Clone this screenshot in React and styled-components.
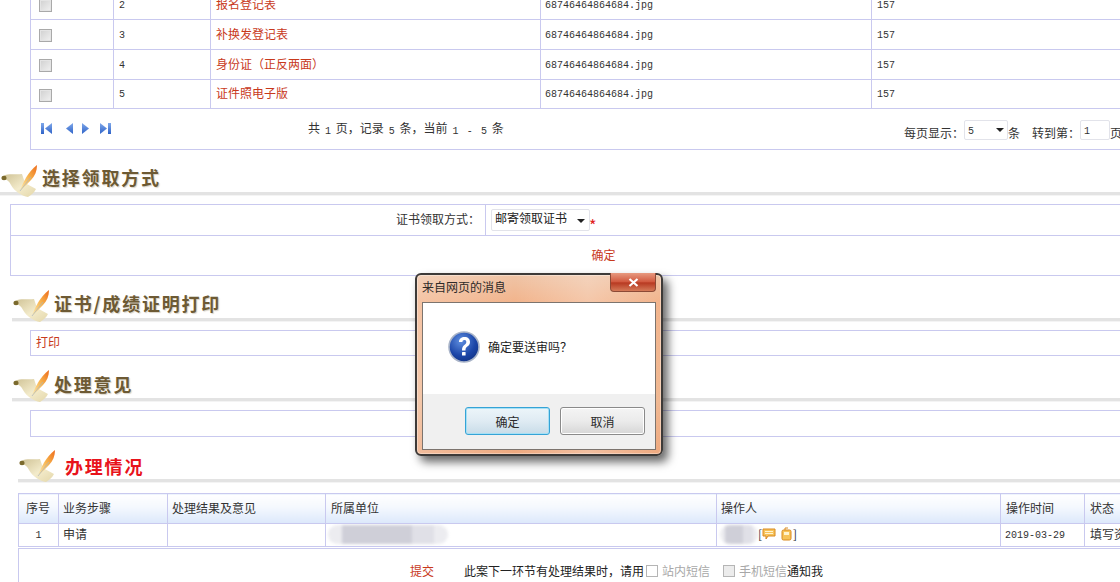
import React from 'react';
import styled, { createGlobalStyle } from 'styled-components';

const line = '#c9c9ef';
const linkRed = '#c8391c';

const GlobalStyle = createGlobalStyle`
  html, body {
    margin: 0;
    padding: 0;
    background: #fff;
    overflow: hidden;
  }
  body {
    font-family: "Noto Sans CJK SC", "Liberation Sans", sans-serif;
    font-size: 12px;
    color: #333;
  }
`;

const Viewport = styled.div`
  position: relative;
  width: 1120px;
  height: 582px;
  overflow: hidden;
`;

const Page = styled.div`
  margin-top: -11px;
  width: 1120px;
`;

const Table = styled.table`
  border-collapse: collapse;
  table-layout: fixed;
  width: ${p => p.$width}px;
  margin-left: ${p => p.$left}px;
  margin-top: ${p => p.$top || 0}px;
  background: #fff;
`;

const Col = styled.col`
  width: ${p => p.$w}px;
`;

const Row = styled.tr`
  height: ${p => p.$h}px;
`;

const Cell = styled.td`
  border: 1px solid ${line};
  padding: 0 ${p => p.$padRight || 0}px 2px ${p => p.$pad ?? 5}px;
  text-align: ${p => p.$align || 'left'};
  vertical-align: middle;
  line-height: 14px;
  white-space: nowrap;
  overflow: hidden;
`;

const HeadCell = styled.th`
  border: 1px solid ${line};
  padding: 0 0 2px ${p => p.$pad ?? 5}px;
  font-weight: normal;
  text-align: left;
  white-space: nowrap;
  background: linear-gradient(#ffffff, #f4f8fe 45%, #dce8fb);
`;

const LinkText = styled.span`
  color: ${linkRed};
`;

const Mono = styled.span`
  font-family: "Liberation Mono", monospace;
  font-size: 10px;
  color: #333;
  vertical-align: -1px;
`;

const Check = styled.input.attrs({ type: 'checkbox' })`
  appearance: none;
  display: block;
  width: 13px;
  height: 13px;
  margin: 4px 0 0;
  border: 1px solid #a9a9a9;
  background: linear-gradient(135deg, #d0d0d0, #f1f1f1);
  box-shadow: inset 0 0 0 1px #e4e4e4;
`;

const Pager = styled.div`
  display: flex;
  align-items: center;
  height: 38px;
  padding-left: 10px;
`;

const NavIcons = styled.div`
  display: flex;
  align-items: center;
  width: 267px;
`;

const NavSvg = styled.svg`
  flex: none;
  margin-left: ${p => p.$gap}px;
`;

const PageInfo = styled.div`
  width: 596px;
  margin-top: 3px;
  word-spacing: 2.2px;
`;

const PageTools = styled.div`
  display: flex;
  align-items: center;
  margin-top: 4px;
`;

const ToolText = styled.span`
  margin: 6px ${p => p.$mr || 0}px 0 0;
  line-height: 14px;
`;

const MiniSelect = styled.div`
  position: relative;
  box-sizing: border-box;
  width: ${p => p.$w}px;
  height: ${p => p.$h}px;
  padding-left: 3px;
  border: 1px solid #e2e3ea;
  border-radius: 2px;
  background: #fff;
  color: #222;
  line-height: ${p => p.$h - 6}px;
`;

const Arrow = styled.i`
  position: absolute;
  right: ${p => p.$right}px;
  top: ${p => p.$top}px;
  border-left: 4px solid transparent;
  border-right: 4px solid transparent;
  border-top: 4px solid #222;
`;

const Heading = styled.div`
  display: flex;
  align-items: flex-start;
  box-sizing: border-box;
  height: ${p => p.$h}px;
  margin: ${p => p.$top}px 0 0 ${p => p.$left}px;
  border-bottom: 3px solid #e3e3e3;
  box-shadow: 0 1px 0 #f4f4f4;
`;

const HeadingText = styled.h2`
  margin: ${p => p.$nudge}px 0 0 ${p => (p.$red ? 7 : 2)}px;
  font-size: 18px;
  line-height: 22px;
  font-weight: 700;
  letter-spacing: 1.8px;
  color: ${p => (p.$red ? '#e8131b' : '#6d5a34')};
  text-shadow: 1px 1px 1px rgba(130, 110, 70, ${p => (p.$red ? 0 : 0.3)});
`;

const Box = styled.div`
  box-sizing: border-box;
  height: ${p => p.$h}px;
  margin: 9px -10px 0 30px;
  padding: 4px 5px;
  border: 1px solid ${line};
  line-height: 14px;
`;

const Star = styled.span`
  color: #e02020;
  font-size: 16px;
  position: relative;
  top: 5px;
  left: -1px;
`;

const FormLine = styled.div`
  display: flex;
  align-items: center;
  margin-top: 2px;
`;

const Blur = styled.div`
  width: ${p => p.$w}px;
  height: 19px;
  border-radius: 10px;
  background:
    linear-gradient(90deg, transparent 12%, #cfcfd8 12%, #cfcfd8 ${p => p.$dark}%, #e0e0e7 ${p => p.$dark}%, #e0e0e7 88%, transparent 88%),
    #ececf0;
  filter: blur(1.5px);
  flex: none;
`;

const OperatorLine = styled.div`
  display: flex;
  align-items: center;
`;

const Bracket = styled.span`
  color: #333;
  line-height: 14px;
`;

const Submit = styled.div`
  box-sizing: border-box;
  display: flex;
  align-items: center;
  height: 60px;
  margin: 1px -10px 0 18px;
  padding: 0 0 16px 391px;
  border: 1px solid ${line};
  border-bottom: none;
  color: #222;
`;

const SubmitNote = styled.span`
  margin-left: 30px;
`;

const Muted = styled.span`
  color: #a8a8a8;
  margin-left: ${p => p.$ml}px;
`;

const SubmitCheck = styled(Check)`
  margin: 0 0 0 ${p => p.$ml}px;
  width: 12px;
  height: 12px;
  border-color: #b5b5b5;
  background: ${p => (p.$grey ? '#ececec' : '#fff')};
  box-shadow: none;
`;

const Dialog = styled.div`
  position: absolute;
  left: 415px;
  top: 273px;
  box-sizing: border-box;
  width: 248px;
  height: 183px;
  padding: 27px 5px 5px;
  border: 2px solid #3d3a38;
  border-radius: 6px;
  background:
    linear-gradient(90deg, rgba(255,255,255,.22), rgba(255,255,255,0) 40%, rgba(255,255,255,.25) 70%, rgba(255,255,255,0)),
    linear-gradient(#efc4a6, #f2b48c 15%, #f0b892 70%, #eea97f);
  box-shadow: 5px 6px 10px rgba(0, 0, 0, 0.6), inset 0 0 0 1px rgba(255, 255, 255, 0.35);
`;

const DialogTitle = styled.div`
  position: absolute;
  left: 5px;
  top: 4px;
  color: #2e2a28;
  line-height: 16px;
`;

const CloseButton = styled.div`
  position: absolute;
  right: 5px;
  top: -2px;
  box-sizing: border-box;
  width: 46px;
  height: 19px;
  border: 1px solid #8c4a36;
  border-top: none;
  border-radius: 0 0 4px 4px;
  background: linear-gradient(#e79a80, #d25a40 48%, #b83a22 55%, #d47a58);
  display: flex;
  align-items: center;
  justify-content: center;
`;

const DialogInner = styled.div`
  box-sizing: border-box;
  height: 148px;
  display: flex;
  flex-direction: column;
  border: 1px solid #7c746e;
  background: #fff;
`;

const DialogBody = styled.div`
  flex: 1;
  display: flex;
  align-items: flex-start;
  gap: 8px;
  padding: 28px 0 0 25px;
  color: #222;
`;

const DialogMessage = styled.div`
  margin-top: 8px;
  line-height: 16px;
`;

const DialogFoot = styled.div`
  display: flex;
  justify-content: flex-end;
  gap: 10px;
  height: 55px;
  box-sizing: border-box;
  padding: 13px 10px 0 0;
  background: #f0f0f0;
`;

const DialogButton = styled.div`
  box-sizing: border-box;
  width: 85px;
  height: 28px;
  display: flex;
  align-items: center;
  justify-content: center;
  color: #2a2a2a;
  border-radius: 3px;
  border: 1px solid ${p => (p.$primary ? '#35a3d6' : '#8a8a8a')};
  background: ${p => p.$primary
    ? 'linear-gradient(#ecf5fa, #dfebf3 50%, #c8dce8)'
    : 'linear-gradient(#f4f4f4, #ebebeb 50%, #d6d6d6)'};
  box-shadow: inset 0 0 0 1px ${p => (p.$primary ? '#a6e0f5' : '#fff')};
`;

const IconSvg = styled.svg`
  flex: none;
  margin: ${p => p.$margin || 0};
`;

const QuillIcon = () => (
  <IconSvg width="40" height="33" viewBox="0 0 40 33">
    <defs>
      <linearGradient id="scroll" x1="0" y1="0" x2="1" y2="1">
        <stop offset="0" stopColor="#cfc295" />
        <stop offset="0.55" stopColor="#f3ebcb" />
        <stop offset="1" stopColor="#e4d7a9" />
      </linearGradient>
      <linearGradient id="feather" x1="0" y1="1" x2="1" y2="0">
        <stop offset="0" stopColor="#fbeeb8" />
        <stop offset="0.55" stopColor="#f6b04a" />
        <stop offset="1" stopColor="#ee6a1a" />
      </linearGradient>
    </defs>
    <path d="M3 11 C9 8 15 10 22 9 L25 18 L36 24 C34 28 31 30 28 32 C22 31 15 27 11 20 C9 16 7 14 3 15 Z" fill="url(#scroll)" />
    <ellipse cx="4" cy="13" rx="2.6" ry="2.2" fill="#7b6a2d" />
    <path d="M20 26 C23 17 28 7 37 0 C37 6 35 11 31 15 C28 18 24 22 20 26 Z" fill="url(#feather)" />
    <path d="M20 26 L31 12" stroke="#a8b4c2" strokeWidth="0.7" />
  </IconSvg>
);

const NavIcon = ({ kind }) => {
  const shapes = {
    first: { w: 11, gap: 0, d: <><rect x="0" y="0" width="3" height="11" fill="url(#navBlue)" /><path d="M11 0 V11 L4 5.5 Z" fill="url(#navBlue)" /></> },
    prev: { w: 8, gap: 13, d: <path d="M8 0 V11 L1 5.5 Z" fill="url(#navBlue)" /> },
    next: { w: 8, gap: 8, d: <path d="M1 0 V11 L8 5.5 Z" fill="url(#navBlue)" /> },
    last: { w: 11, gap: 11, d: <><path d="M0 0 V11 L7 5.5 Z" fill="url(#navBlue)" /><rect x="8" y="0" width="3" height="11" fill="url(#navBlue)" /></> },
  };
  const { w, gap, d } = shapes[kind];
  return (
    <NavSvg $gap={gap} width={w} height="11" viewBox={`0 0 ${w} 11`}>
      <defs>
        <linearGradient id="navBlue" x1="0" y1="0" x2="0" y2="1">
          <stop offset="0" stopColor="#7fa8ea" />
          <stop offset="1" stopColor="#2f63c8" />
        </linearGradient>
      </defs>
      {d}
    </NavSvg>
  );
};

const QuestionIcon = () => (
  <IconSvg width="32" height="32" viewBox="0 0 32 32">
    <defs>
      <radialGradient id="qball" cx="0.4" cy="0.3" r="0.8">
        <stop offset="0" stopColor="#5f8fe0" />
        <stop offset="0.6" stopColor="#1c46a8" />
        <stop offset="1" stopColor="#10307f" />
      </radialGradient>
    </defs>
    <circle cx="16" cy="16" r="15" fill="url(#qball)" stroke="#a9b4c8" strokeWidth="1.6" />
    <path d="M11 11 C11 7.5 13.5 6 16.5 6 C20 6 22 8 22 11 C22 13.5 20.5 14.6 19 15.8 C17.8 16.8 17.5 17.6 17.5 19.5 H14 C14 17 14.5 15.4 16 14.2 C17.5 13 18.3 12.3 18.3 11 C18.3 9.6 17.5 9 16.3 9 C15 9 14.4 9.9 14.4 11 Z" fill="#fff" />
    <rect x="14" y="21" width="3.6" height="3.6" rx="0.6" fill="#fff" />
  </IconSvg>
);

const MessageIcon = () => (
  <IconSvg width="14" height="12" viewBox="0 0 14 12">
    <path d="M1 1 H13 V8 H6 L4 11 V8 H1 Z" fill="#f6c35a" stroke="#d98a20" />
    <path d="M3 3.5 H11 M3 5.5 H11" stroke="#fff3cf" />
  </IconSvg>
);

const PhoneIcon = () => (
  <IconSvg $margin="0 1px 0 5px" width="11" height="14" viewBox="0 0 11 14">
    <rect x="1" y="3" width="9" height="10" rx="1.5" fill="#f6c35a" stroke="#d98a20" />
    <rect x="3" y="5" width="5" height="3" fill="#fff3cf" />
    <path d="M4 3 V1 H7" stroke="#d98a20" fill="none" />
  </IconSvg>
);

const attachments = [
  { no: 2, name: '报名登记表', h: 30 },
  { no: 3, name: '补换发登记表', h: 30 },
  { no: 4, name: '身份证（正反两面）', h: 30 },
  { no: 5, name: '证件照电子版', h: 29 },
];

export default function App() {
  return (
    <Viewport>
      <GlobalStyle />
      <Page>
        <Table $width={1110} $left={30}>
          <colgroup>
            <Col $w={83} /><Col $w={97} /><Col $w={330} /><Col $w={331} /><Col $w={269} />
          </colgroup>
          <tbody>
            {attachments.map(a => (
              <Row key={a.no} $h={a.h}>
                <Cell $pad={8}><Check /></Cell>
                <Cell><Mono>{a.no}</Mono></Cell>
                <Cell><LinkText>{a.name}</LinkText></Cell>
                <Cell $pad={4}><Mono>68746464864684.jpg</Mono></Cell>
                <Cell><Mono>157</Mono></Cell>
              </Row>
            ))}
            <Row $h={41}>
              <Cell colSpan={5} $pad={0}>
                <Pager>
                  <NavIcons>
                    <NavIcon kind="first" />
                    <NavIcon kind="prev" />
                    <NavIcon kind="next" />
                    <NavIcon kind="last" />
                  </NavIcons>
                  <PageInfo>共 <Mono>1</Mono> 页，记录 <Mono>5</Mono> 条，当前 <Mono>1 - 5</Mono> 条</PageInfo>
                  <PageTools>
                    <ToolText>每页显示：</ToolText>
                    <MiniSelect $w={44} $h={20}><Mono>5</Mono><Arrow $right={3} $top={7} /></MiniSelect>
                    <ToolText $mr={12}>条</ToolText>
                    <ToolText>转到第：</ToolText>
                    <MiniSelect $w={30} $h={20}><Mono>1</Mono></MiniSelect>
                    <ToolText>页</ToolText>
                  </PageTools>
                </Pager>
              </Cell>
            </Row>
          </tbody>
        </Table>

        <Heading $h={30} $top={15} $left={0}>
          <QuillIcon />
          <HeadingText $nudge={1}>选择领取方式</HeadingText>
        </Heading>

        <Table $width={1120} $left={10} $top={9}>
          <colgroup><Col $w={475} /><Col $w={645} /></colgroup>
          <tbody>
            <Row $h={31}>
              <Cell $align="right" $pad={0} $padRight={5}>证书领取方式：</Cell>
              <Cell>
                <FormLine>
                  <MiniSelect $w={99} $h={22}>邮寄领取证书<Arrow $right={4} $top={9} /></MiniSelect>
                  <Star>*</Star>
                </FormLine>
              </Cell>
            </Row>
            <Row $h={40}>
              <Cell colSpan={2} $align="center" $pad={66}><LinkText>确定</LinkText></Cell>
            </Row>
          </tbody>
        </Table>

        <Heading $h={31} $top={14} $left={12}>
          <QuillIcon />
          <HeadingText $nudge={2}>证书/成绩证明打印</HeadingText>
        </Heading>
        <Box $h={26}><LinkText>打印</LinkText></Box>

        <Heading $h={31} $top={14} $left={12}>
          <QuillIcon />
          <HeadingText $nudge={3}>处理意见</HeadingText>
        </Heading>
        <Box $h={27} />

        <Heading $h={32} $top={13} $left={18}>
          <QuillIcon />
          <HeadingText $red $nudge={5}>办理情况</HeadingText>
        </Heading>

        <Table $width={1112} $left={18} $top={11}>
          <colgroup>
            <Col $w={40} /><Col $w={109} /><Col $w={158} /><Col $w={391} />
            <Col $w={284} /><Col $w={84} /><Col $w={46} />
          </colgroup>
          <thead>
            <Row $h={30}>
              <HeadCell $pad={7}>序号</HeadCell>
              <HeadCell $pad={4}>业务步骤</HeadCell>
              <HeadCell $pad={4}>处理结果及意见</HeadCell>
              <HeadCell>所属单位</HeadCell>
              <HeadCell $pad={4}>操作人</HeadCell>
              <HeadCell>操作时间</HeadCell>
              <HeadCell>状态</HeadCell>
            </Row>
          </thead>
          <tbody>
            <Row $h={23}>
              <Cell $align="center" $pad={0}><Mono>1</Mono></Cell>
              <Cell $pad={4}>申请</Cell>
              <Cell />
              <Cell $pad={2}><Blur $w={120} $dark={70} /></Cell>
              <Cell $pad={3}>
                <OperatorLine>
                  <Blur $w={38} $dark={60} />
                  <Bracket>[</Bracket>
                  <MessageIcon />
                  <PhoneIcon />
                  <Bracket>]</Bracket>
                </OperatorLine>
              </Cell>
              <Cell $pad={4}><Mono>2019-03-29</Mono></Cell>
              <Cell>填写资料</Cell>
            </Row>
          </tbody>
        </Table>

        <Submit>
          <LinkText>提交</LinkText>
          <SubmitNote>此案下一环节有处理结果时，请用</SubmitNote>
          <SubmitCheck $ml={2} />
          <Muted $ml={4}>站内短信</Muted>
          <SubmitCheck $ml={13} $grey />
          <Muted $ml={4}>手机短信</Muted>
          通知我
        </Submit>
      </Page>

      <Dialog>
        <DialogTitle>来自网页的消息</DialogTitle>
        <CloseButton>
          <svg width="11" height="9" viewBox="0 0 11 9">
            <path d="M1.5 1 L9.5 8 M9.5 1 L1.5 8" stroke="#fff" strokeWidth="2.2" />
          </svg>
        </CloseButton>
        <DialogInner>
          <DialogBody>
            <QuestionIcon />
            <DialogMessage>确定要送审吗？</DialogMessage>
          </DialogBody>
          <DialogFoot>
            <DialogButton $primary>确定</DialogButton>
            <DialogButton>取消</DialogButton>
          </DialogFoot>
        </DialogInner>
      </Dialog>
    </Viewport>
  );
}
